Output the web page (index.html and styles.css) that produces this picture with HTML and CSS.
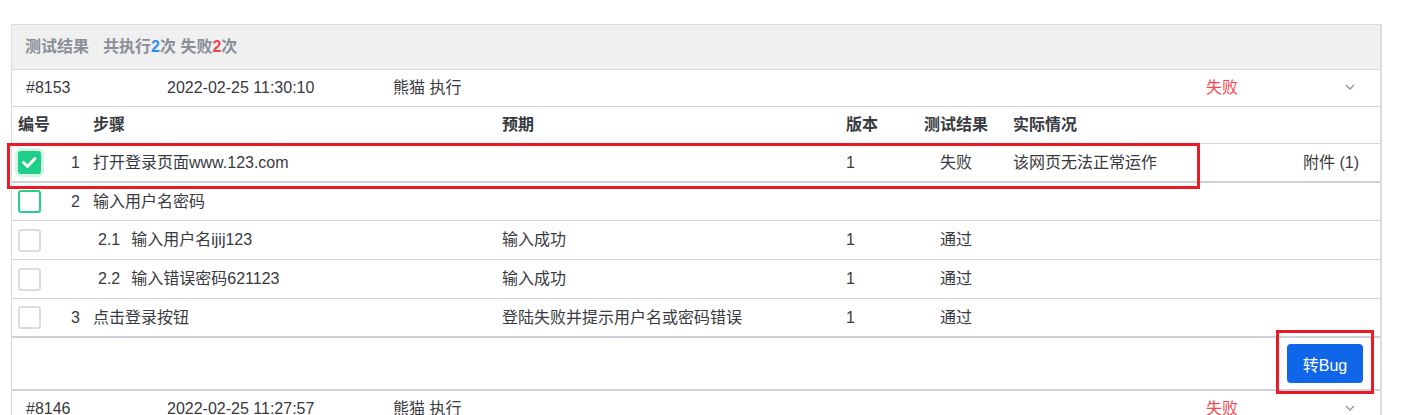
FILE: index.html
```html
<!DOCTYPE html>
<html lang="zh-CN">
<head>
<meta charset="utf-8">
<title>测试结果</title>
<link rel="stylesheet" href="styles.css">
</head>
<body>
<div class="panel">
  <div class="panel-head">
    <span class="title">测试结果</span>
    <span class="summary">共执行<span class="n-blue">2</span>次 失败<span class="n-red">2</span>次</span>
  </div>

  <div class="run">
    <span class="run-id">#8153</span>
    <span class="run-date">2022-02-25 11:30:10</span>
    <span class="run-user">熊猫 执行</span>
    <span class="run-status">失败</span>
    <svg class="chev" width="10" height="6" viewBox="0 0 10 6"><polyline points="1,1 5,5 9,1" fill="none" stroke="#8b96aa" stroke-width="1.4"/></svg>
  </div>

  <div class="steps">
    <div class="row head">
      <div class="c1">编号</div>
      <div class="c2">步骤</div>
      <div class="c3">预期</div>
      <div class="c4">版本</div>
      <div class="c5">测试结果</div>
      <div class="c6">实际情况</div>
    </div>
    <div class="row thick">
      <div class="c1"><span class="cb checked"><svg width="23" height="23" viewBox="0 0 23 23"><polyline points="5.5,11.5 9.5,15.5 17,7.5" fill="none" stroke="#fff" stroke-width="3" stroke-linecap="round" stroke-linejoin="round"/></svg></span><span class="num">1</span></div>
      <div class="c2">打开登录页面www.123.com</div>
      <div class="c3"></div>
      <div class="c4">1</div>
      <div class="c5">失败</div>
      <div class="c6"><span>该网页无法正常运作</span><span class="attach">附件 (1)</span></div>
    </div>
    <div class="row">
      <div class="c1"><span class="cb active"></span><span class="num">2</span></div>
      <div class="c2">输入用户名密码</div>
      <div class="c3"></div>
      <div class="c4"></div>
      <div class="c5"></div>
      <div class="c6"></div>
    </div>
    <div class="row child">
      <div class="c1"><span class="cb"></span></div>
      <div class="c2"><span class="subnum">2.1</span>输入用户名ijij123</div>
      <div class="c3">输入成功</div>
      <div class="c4">1</div>
      <div class="c5">通过</div>
      <div class="c6"></div>
    </div>
    <div class="row child">
      <div class="c1"><span class="cb"></span></div>
      <div class="c2"><span class="subnum">2.2</span>输入错误密码621123</div>
      <div class="c3">输入成功</div>
      <div class="c4">1</div>
      <div class="c5">通过</div>
      <div class="c6"></div>
    </div>
    <div class="row thick">
      <div class="c1"><span class="cb"></span><span class="num">3</span></div>
      <div class="c2">点击登录按钮</div>
      <div class="c3">登陆失败并提示用户名或密码错误</div>
      <div class="c4">1</div>
      <div class="c5">通过</div>
      <div class="c6"></div>
    </div>
  </div>

  <div class="actions">
    <button class="btn-bug">转Bug</button>
  </div>

  <div class="run">
    <span class="run-id">#8146</span>
    <span class="run-date">2022-02-25 11:27:57</span>
    <span class="run-user">熊猫 执行</span>
    <span class="run-status">失败</span>
    <svg class="chev" width="10" height="6" viewBox="0 0 10 6"><polyline points="1,1 5,5 9,1" fill="none" stroke="#8b96aa" stroke-width="1.4"/></svg>
  </div>
</div>

<div class="mark mark-row"></div>
<div class="mark mark-btn"></div>
</body>
</html>
```

FILE: styles.css
```css
* { box-sizing: border-box; }

html, body {
  margin: 0;
  background: #ffffff;
}

body {
  position: relative;
  padding: 24px 0 0 11px;
  font-family: "Liberation Sans", "Noto Sans CJK SC", sans-serif;
  font-size: 16px;
  line-height: 20px;
  color: #383a40;
  height: 415px;
  overflow: hidden;
}

.panel {
  width: 1371px;
  border: 1px solid #dcdcdf;
  border-right-width: 2px;
  border-bottom: none;
}

.panel-head {
  height: 45px;
  background: #f0f0f0;
  border-bottom: 1px solid #d6d8df;
  display: flex;
  align-items: center;
  padding-left: 13px;
  gap: 14px;
  font-weight: bold;
  color: #8a8e98;
}

.n-blue { color: #2c8df0; }
.n-red { color: #f2464f; }

.run {
  height: 37px;
  border-bottom: 1px solid #d3d6de;
  display: flex;
  align-items: center;
  padding-left: 14px;
  color: #383a40;
}

.run-id { width: 141px; }
.run-date { width: 226px; }
.run-user { flex: 1; }
.run-status { color: #f5484f; }
.chev { margin-left: 107px; margin-right: 25px; margin-top: -2px; }

.row {
  display: grid;
  grid-template-columns: 81px 409px 344px 78px 89px 1fr;
  height: 38px;
  border-bottom: 1px solid #d3d6de;
  align-items: center;
}

.row.child { height: 39px; }
.row.thick { height: 39px; border-bottom: 2px solid #cfd1da; }
.row.head { height: 37px; font-weight: bold; color: #383a40; }

.c1 {
  display: flex;
  align-items: center;
  justify-content: space-between;
  padding-left: 6px;
  padding-right: 13px;
}

.c5 {
  text-align: center;
  padding-right: 25px;
}

.c6 {
  display: flex;
  justify-content: space-between;
  padding-right: 21px;
}

.subnum {
  margin-left: 5px;
  margin-right: 11px;
}

.cb {
  display: block;
  width: 23px;
  height: 23px;
  border: 2px solid #dcdcdc;
  border-radius: 3px;
  background: #fff;
}

.cb.active { border-color: #24d08c; }

.cb.checked {
  border: none;
  background: #1ecf88;
  box-shadow: 0 0 0 3px #d2f7e6;
}

.cb svg { display: block; }

.actions {
  height: 53px;
  border-bottom: 2px solid #cfd1da;
  display: flex;
  justify-content: flex-end;
  align-items: flex-start;
  padding: 6px 17px 0 0;
}

.btn-bug {
  width: 76px;
  height: 39px;
  border: none;
  border-radius: 4px;
  background: #0f66e9;
  color: #ffffff;
  font-family: "Liberation Sans", "Noto Sans CJK SC", sans-serif;
  font-size: 16px;
  padding: 0;
}

.mark {
  position: absolute;
  border: 3px solid #ec1a24;
  pointer-events: none;
}

.mark-row { left: 7px; top: 143px; width: 1193px; height: 46px; }
.mark-btn { left: 1276px; top: 330px; width: 98px; height: 64px; }
```
